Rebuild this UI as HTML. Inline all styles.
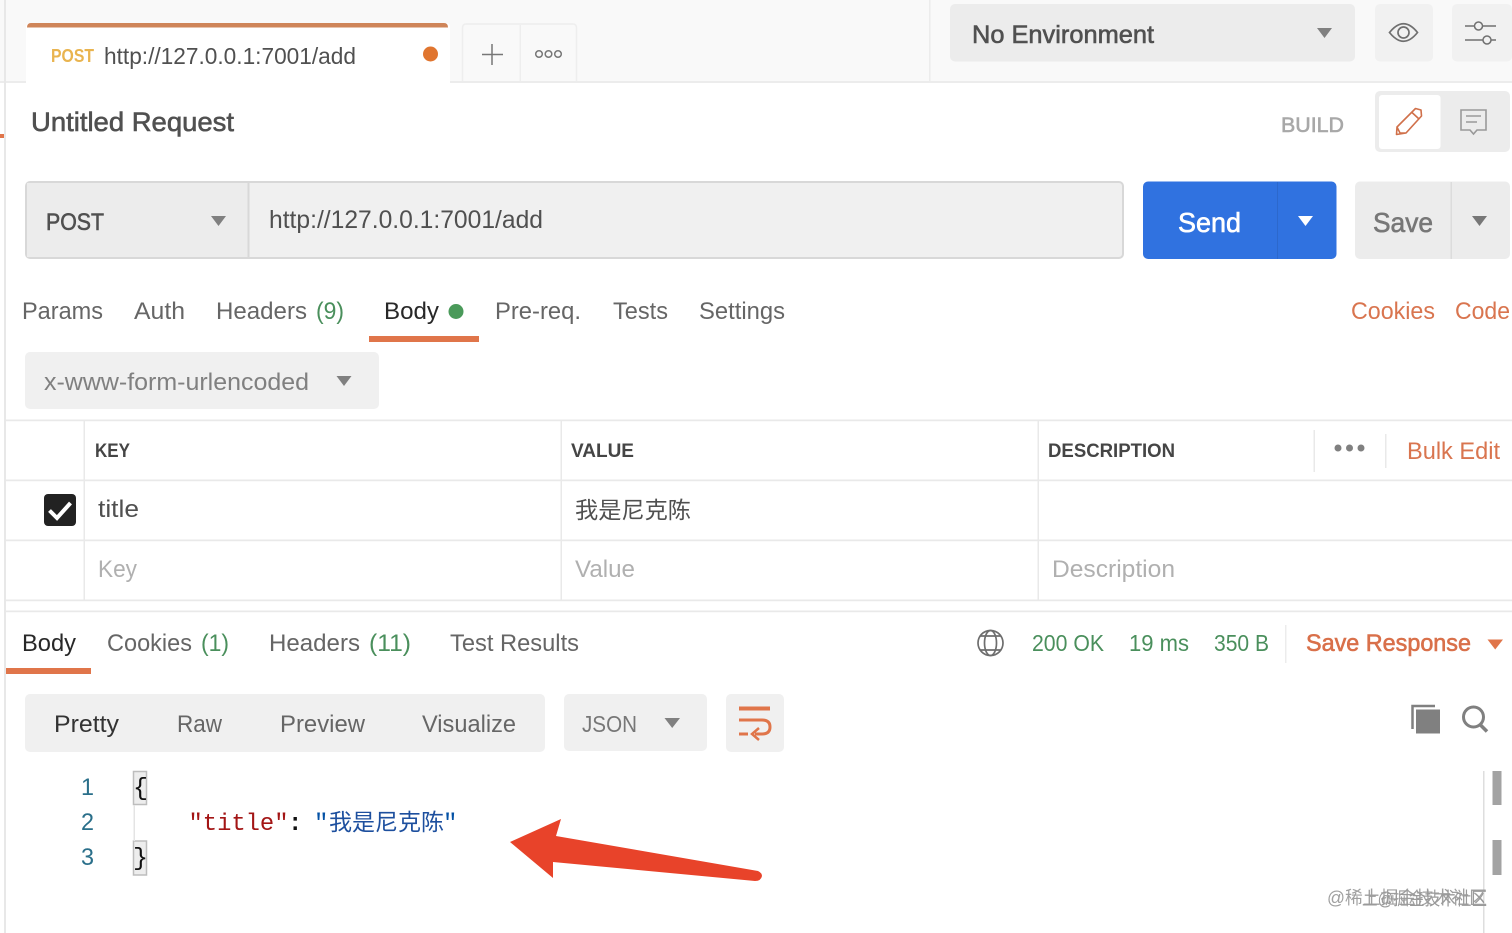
<!DOCTYPE html>
<html lang="zh">
<head>
<meta charset="utf-8">
<title>Untitled Request</title>
<style>
html,body{margin:0;padding:0;background:#fff;width:1512px;height:933px;overflow:hidden}
svg{display:block;position:absolute;left:0;top:0;filter:blur(.3px)}
text{font-family:"Liberation Sans","Noto Sans CJK SC",sans-serif;font-size:24px;fill:#666}
.semi{stroke-width:.6px}
.mono{font-family:"Liberation Mono","Noto Sans CJK SC",monospace}
</style>
</head>
<body>
<svg width="1512" height="933" viewBox="0 0 1512 933" xmlns="http://www.w3.org/2000/svg">
<!-- top bar -->
<rect x="0" y="0" width="1512" height="81" fill="#f9f9f9"/>
<rect x="0" y="81" width="1512" height="2" fill="#ececec"/>
<rect x="929" y="0" width="1.5" height="81" fill="#ececec"/>
<rect x="4" y="0" width="2" height="933" fill="#e8e8e8"/>
<rect x="0" y="134" width="4" height="4" fill="#e0754a"/>

<!-- tab -->
<path d="M26 83V27Q26 23 30 23H446Q450 23 450 27V83Z" fill="#fff"/>
<path d="M27 27.500Q27 23 31 23H444Q448 23 448 27.500Z" fill="#cf8559"/>
<text x="51" y="62" textLength="43" lengthAdjust="spacingAndGlyphs" font-weight="700" style="font-size:18.500px;fill:#e9b44f">POST</text>
<text x="104" y="64" textLength="252" lengthAdjust="spacingAndGlyphs" style="font-size:23px;fill:#505050">http://127.0.0.1:7001/add</text>
<circle cx="430.500" cy="54" r="7.500" fill="#e0752f"/>

<!-- add / more tabs -->
<path d="M462.500 81V28Q462.500 24 466 24H573Q576.500 24 576.500 28V81" fill="#f9f9f9" stroke="#eeeeee" stroke-width="1.500"/>
<rect x="519.500" y="25" width="1.500" height="56" fill="#eeeeee"/>
<path d="M492 44V65M482 54.500H503" stroke="#777" stroke-width="1.500" fill="none"/>
<g fill="none" stroke="#777" stroke-width="1.500"><circle cx="539" cy="54" r="3.300"/><circle cx="548.500" cy="54" r="3.300"/><circle cx="558" cy="54" r="3.300"/></g>

<!-- environment -->
<rect x="950" y="4" width="405" height="57.500" rx="5" fill="#ececec"/>
<text x="972" y="43" textLength="182" lengthAdjust="spacingAndGlyphs" class="semi" style="font-size:25px;fill:#505050;stroke:#505050">No Environment</text>
<path d="M1317 28H1332L1324.500 38Z" fill="#808080"/>
<rect x="1375" y="4" width="58" height="57.500" rx="5" fill="#f1f1f1"/>
<path d="M1389.500 32.500Q1403.500 15 1417.500 32.500Q1403.500 50 1389.500 32.500Z" fill="none" stroke="#707070" stroke-width="1.700"/>
<circle cx="1403.500" cy="32.500" r="5.500" fill="none" stroke="#707070" stroke-width="1.700"/>
<rect x="1452" y="4" width="60" height="57.500" rx="5" fill="#f1f1f1"/>
<g fill="none" stroke="#707070" stroke-width="1.500"><path d="M1465 26H1474M1483 26H1496M1465 40H1483M1491 40H1496"/><circle cx="1478.500" cy="26" r="4"/><circle cx="1487" cy="40" r="4"/></g>

<!-- request name -->
<text x="31" y="131" textLength="203" lengthAdjust="spacingAndGlyphs" class="semi" style="font-size:27px;fill:#505050;stroke:#505050">Untitled Request</text>
<text x="1281" y="132" textLength="63" lengthAdjust="spacingAndGlyphs" class="semi" style="font-size:21.500px;fill:#a8a8a8;stroke:#a8a8a8">BUILD</text>
<rect x="1375" y="91" width="135" height="61" rx="5" fill="#ececec"/>
<rect x="1379" y="95" width="61.500" height="54" rx="3" fill="#fff"/>
<path d="M1397 127L1400 133L1406 133L1421.500 116L1421 110L1415.500 108.500ZM1412 112.500L1418.500 118.500M1397 127L1396.500 134.500L1406 133" fill="none" stroke="#d0704a" stroke-width="1.600" stroke-linejoin="round"/>
<path d="M1461 110H1486V130H1477L1473.500 134L1470 130H1461Z" fill="none" stroke="#999" stroke-width="1.600"/>
<path d="M1466 116H1481M1466 122H1477" stroke="#999" stroke-width="1.600"/>

<!-- url bar -->
<rect x="26" y="182" width="1097" height="76" rx="4" fill="#f0f0f0" stroke="#d8d8d8" stroke-width="2"/>
<path d="M27 183H248V257H27Z" fill="#ececec"/>
<rect x="247.500" y="182" width="2" height="76" fill="#d8d8d8"/>
<text x="46" y="230" textLength="58" lengthAdjust="spacingAndGlyphs" class="semi" style="font-size:24px;fill:#505050;stroke:#505050">POST</text>
<path d="M211 216H226L218.500 226Z" fill="#808080"/>
<text x="269" y="228" textLength="274" lengthAdjust="spacingAndGlyphs" style="font-size:25px;fill:#505050">http://127.0.0.1:7001/add</text>

<!-- send -->
<rect x="1143" y="181.500" width="193.500" height="77.500" rx="5" fill="#3072e0"/>
<rect x="1277" y="182" width="1" height="77" fill="#2c68cc"/>
<text x="1178" y="232" textLength="63" lengthAdjust="spacingAndGlyphs" class="semi" style="font-size:28px;fill:#fff;stroke:#fff">Send</text>
<path d="M1298 216H1313L1305.500 226Z" fill="#fff"/>
<!-- save -->
<rect x="1355" y="181.500" width="155" height="77.500" rx="5" fill="#ececec"/>
<rect x="1450.500" y="182" width="1.500" height="77" fill="#dcdcdc"/>
<text x="1373" y="232" textLength="60" lengthAdjust="spacingAndGlyphs" class="semi" style="font-size:28px;fill:#777;stroke:#777">Save</text>
<path d="M1472 216H1487L1479.500 226Z" fill="#777"/>

<!-- request tabs -->
<text x="22" y="319" textLength="81" lengthAdjust="spacingAndGlyphs">Params</text>
<text x="134" y="319" textLength="51" lengthAdjust="spacingAndGlyphs">Auth</text>
<text x="216" y="319" textLength="91" lengthAdjust="spacingAndGlyphs">Headers</text>
<text x="316" y="319" textLength="28" lengthAdjust="spacingAndGlyphs" style="fill:#4a8f5c">(9)</text>
<text x="384" y="319" textLength="55" lengthAdjust="spacingAndGlyphs" style="fill:#282828">Body</text>
<circle cx="456" cy="311.500" r="7.500" fill="#4a9a5a"/>
<text x="495" y="319" textLength="86" lengthAdjust="spacingAndGlyphs">Pre-req.</text>
<text x="613" y="319" textLength="55" lengthAdjust="spacingAndGlyphs">Tests</text>
<text x="699" y="319" textLength="86" lengthAdjust="spacingAndGlyphs">Settings</text>
<text x="1351" y="319" textLength="84" lengthAdjust="spacingAndGlyphs" style="fill:#d9754f">Cookies</text>
<text x="1455" y="319" textLength="55" lengthAdjust="spacingAndGlyphs" style="fill:#d9754f">Code</text>
<rect x="369" y="336" width="110" height="6" fill="#e0754a"/>

<!-- body type -->
<rect x="25" y="352" width="354" height="57" rx="5" fill="#f0f0f0"/>
<text x="44" y="390" textLength="265" lengthAdjust="spacingAndGlyphs" style="fill:#808080">x-www-form-urlencoded</text>
<path d="M336.500 376H351.500L344 386Z" fill="#808080"/>

<!-- table -->
<g fill="#e9e9e9">
<rect x="6" y="419.500" width="1506" height="1.700"/>
<rect x="6" y="479.500" width="1506" height="1.700"/>
<rect x="6" y="539.500" width="1506" height="1.700"/>
<rect x="6" y="599.500" width="1506" height="1.700"/>
<rect x="6" y="610.500" width="1506" height="1.700"/>
<rect x="83.500" y="420" width="1.500" height="180"/>
<rect x="560.500" y="420" width="1.500" height="180"/>
<rect x="1037.500" y="420" width="1.500" height="180"/>
<rect x="1313.500" y="430" width="1.500" height="42"/>
<rect x="1385" y="434" width="1.500" height="34"/>
</g>
<text x="95" y="457" textLength="35" lengthAdjust="spacingAndGlyphs" font-weight="700" style="font-size:19.500px;fill:#454545">KEY</text>
<text x="571" y="457" textLength="63" lengthAdjust="spacingAndGlyphs" font-weight="700" style="font-size:19.500px;fill:#454545">VALUE</text>
<text x="1048" y="457" textLength="127" lengthAdjust="spacingAndGlyphs" font-weight="700" style="font-size:19.500px;fill:#454545">DESCRIPTION</text>
<g fill="#808080"><circle cx="1338" cy="448" r="3.500"/><circle cx="1349.500" cy="448" r="3.500"/><circle cx="1361" cy="448" r="3.500"/></g>
<text x="1407" y="459" textLength="93" lengthAdjust="spacingAndGlyphs" style="fill:#d9754f">Bulk Edit</text>

<rect x="44" y="494" width="32" height="32" rx="4" fill="#222"/>
<path d="M49.500 510.500L57 518L70.500 503" fill="none" stroke="#fff" stroke-width="4"/>
<text x="98" y="517" textLength="41" lengthAdjust="spacingAndGlyphs" style="fill:#505050">title</text>
<text x="575" y="518" textLength="116" lengthAdjust="spacingAndGlyphs" style="font-size:23px;fill:#505050">我是尼克陈</text>
<text x="98" y="577" textLength="39" lengthAdjust="spacingAndGlyphs" style="fill:#b0b0b0">Key</text>
<text x="575" y="577" textLength="60" lengthAdjust="spacingAndGlyphs" style="fill:#b0b0b0">Value</text>
<text x="1052" y="577" textLength="123" lengthAdjust="spacingAndGlyphs" style="fill:#b0b0b0">Description</text>

<!-- response tabs -->
<text x="22" y="651" textLength="54" lengthAdjust="spacingAndGlyphs" style="fill:#282828">Body</text>
<text x="107" y="651" textLength="85" lengthAdjust="spacingAndGlyphs">Cookies</text>
<text x="201" y="651" textLength="28" lengthAdjust="spacingAndGlyphs" style="fill:#4a8f5c">(1)</text>
<text x="269" y="651" textLength="91" lengthAdjust="spacingAndGlyphs">Headers</text>
<text x="369" y="651" textLength="42" lengthAdjust="spacingAndGlyphs" style="fill:#4a8f5c">(11)</text>
<text x="450" y="651" textLength="129" lengthAdjust="spacingAndGlyphs">Test Results</text>
<rect x="6" y="668" width="85" height="6" fill="#e0754a"/>

<g fill="none" stroke="#6e6e6e" stroke-width="1.700">
<circle cx="990.500" cy="643" r="12.500"/>
<ellipse cx="990.500" cy="643" rx="6" ry="12.500"/>
<path d="M980 636H1001M980 650H1001"/>
</g>
<text x="1032" y="651" textLength="72" lengthAdjust="spacingAndGlyphs" style="font-size:23px;fill:#4a8f5c">200 OK</text>
<text x="1129" y="651" textLength="60" lengthAdjust="spacingAndGlyphs" style="font-size:23px;fill:#4a8f5c">19 ms</text>
<text x="1214" y="651" textLength="55" lengthAdjust="spacingAndGlyphs" style="font-size:23px;fill:#4a8f5c">350 B</text>
<rect x="1285" y="625" width="1.500" height="38" fill="#ececec"/>
<text x="1306" y="651" textLength="165" lengthAdjust="spacingAndGlyphs" class="semi" style="fill:#d9704a;stroke:#d9704a">Save Response</text>
<path d="M1487.500 639.500H1503L1495.200 649.500Z" fill="#e0754a"/>

<!-- response toolbar -->
<rect x="25" y="694" width="520" height="58" rx="5" fill="#f0f0f0"/>
<text x="54" y="732" textLength="65" lengthAdjust="spacingAndGlyphs" style="fill:#333">Pretty</text>
<text x="177" y="732" textLength="45" lengthAdjust="spacingAndGlyphs">Raw</text>
<text x="280" y="732" textLength="85" lengthAdjust="spacingAndGlyphs">Preview</text>
<text x="422" y="732" textLength="94" lengthAdjust="spacingAndGlyphs">Visualize</text>
<rect x="564" y="694" width="143" height="57" rx="5" fill="#f0f0f0"/>
<text x="582" y="732" textLength="55" lengthAdjust="spacingAndGlyphs" style="font-size:23px;fill:#777">JSON</text>
<path d="M664.500 718H680L672.200 728Z" fill="#808080"/>
<rect x="726" y="694" width="58" height="58" rx="5" fill="#f0f0f0"/>
<path d="M739 708.500H770" stroke="#e0754a" stroke-width="4"/>
<path d="M739 720H762Q770 720 770 727Q770 734 762 734H755M739 734H748" fill="none" stroke="#e0754a" stroke-width="3"/>
<path d="M759 728L752 734L759 740" fill="none" stroke="#e0754a" stroke-width="2.500"/>

<path d="M1412.500 729V706H1435" fill="none" stroke="#808080" stroke-width="2.500"/>
<rect x="1416" y="709.500" width="24" height="24" fill="#808080"/>
<circle cx="1473.500" cy="717" r="10" fill="none" stroke="#808080" stroke-width="3"/>
<path d="M1480 724.500L1487 731.500" stroke="#808080" stroke-width="3.500"/>

<!-- code -->
<text x="81" y="795" textLength="13" lengthAdjust="spacingAndGlyphs" style="fill:#2a6f8a">1</text>
<text x="81" y="830" textLength="13" lengthAdjust="spacingAndGlyphs" style="fill:#2a6f8a">2</text>
<text x="81" y="865" textLength="13" lengthAdjust="spacingAndGlyphs" style="fill:#2a6f8a">3</text>
<rect x="133.500" y="771.500" width="13" height="33" fill="#ededed" stroke="#bdbdbd" stroke-width="1.500"/>
<rect x="133.500" y="841" width="13" height="34" fill="#ededed" stroke="#bdbdbd" stroke-width="1.500"/>
<rect x="133.500" y="805" width="1.500" height="36" fill="#e4e4e4"/>
<text x="133" y="795" class="mono" style="font-size:25px;fill:#111">{</text>
<text x="133" y="865" class="mono" style="font-size:25px;fill:#111">}</text>
<text x="188.500" y="830" textLength="100" lengthAdjust="spacingAndGlyphs" class="mono" style="fill:#a31515">"title"</text>
<text x="288" y="830" class="mono" style="fill:#111;font-weight:700">:</text>
<text x="314" y="830" class="mono" style="fill:#0451a5">"</text>
<text x="329" y="830" textLength="115" lengthAdjust="spacingAndGlyphs" style="font-size:23px;fill:#1d4f9e">我是尼克陈</text>
<text x="443" y="830" class="mono" style="fill:#0451a5">"</text>

<!-- annotation arrow -->
<path d="M510 842L561 819L556 836L758 871Q762 873 762 876Q761 881 755 881L553 862L553 878Z" fill="#e8432a"/>

<!-- scrollbar -->
<rect x="1483" y="771" width="1.500" height="162" fill="#dedede"/>
<rect x="1492.500" y="771" width="9" height="34" fill="#a3a3a3"/>
<rect x="1492.500" y="840" width="9" height="35" fill="#a3a3a3"/>

<!-- watermark -->
<text x="1327" y="904" textLength="160" lengthAdjust="spacingAndGlyphs" style="font-size:18px;fill:#a0a0a0">@稀土掘金技术社区</text>
<text x="1362" y="905" textLength="125" lengthAdjust="spacingAndGlyphs" style="font-size:18px;fill:#9a9a9a">上@掘金技术社区</text>
</svg>
</body>
</html>
